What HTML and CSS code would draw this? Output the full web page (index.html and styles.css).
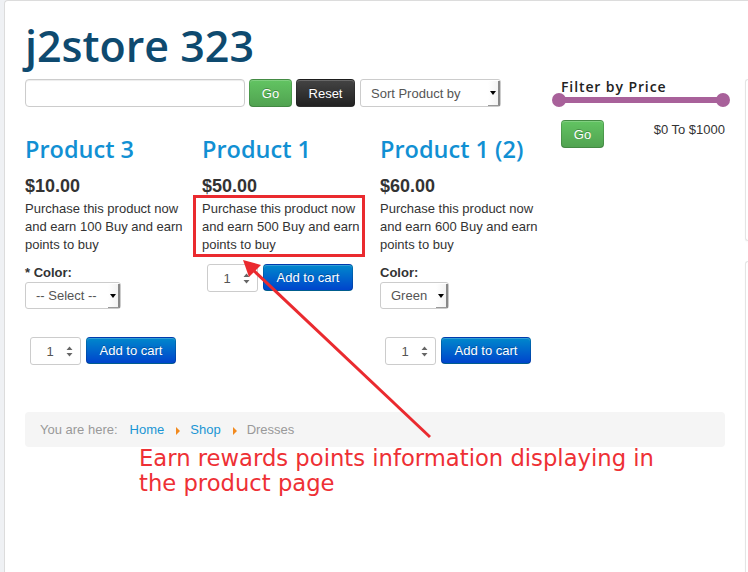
FILE: index.html
```html
<!DOCTYPE html>
<html>
<head>
<meta charset="utf-8">
<link rel="stylesheet" href="styles.css">
</head>
<body>
<div class="frame">
  <div class="page">
    <main class="content">
      <h1 class="site-title">j2store 323</h1>
      <div class="layout">
        <div class="main-col">
          <div class="toolbar">
            <div class="text-input"></div>
            <span class="btn btn-success">Go</span>
            <span class="btn btn-inverse">Reset</span>
            <div class="select select-sort"><span class="select-text">Sort Product by</span><span class="select-arrow"><svg width="6" height="4" viewBox="0 0 6 4"><path d="M0 0H6L3 4Z" fill="#000"/></svg></span></div>
          </div>
          <div class="products">
            <div class="product">
              <h2 class="product-title">Product 3</h2>
              <div class="price">$10.00</div>
              <p class="desc">Purchase this product now and earn 100 Buy and earn points to buy</p>
              <div class="options">
                <div class="opt-label">* Color:</div>
                <div class="select select-opt"><span class="select-text">-- Select --</span><span class="select-arrow"><svg width="6" height="4" viewBox="0 0 6 4"><path d="M0 0H6L3 4Z" fill="#000"/></svg></span></div>
              </div>
              <div class="cart-row">
                <div class="qty"><span class="qty-val">1</span><svg class="spin" width="7" height="11" viewBox="0 0 7 11"><path d="M0.5 4L3.5 0.5L6.5 4Z M0.5 7L3.5 10.5L6.5 7Z" fill="#666"/></svg></div>
                <span class="btn btn-primary">Add to cart</span>
              </div>
            </div>
            <div class="product">
              <h2 class="product-title">Product 1</h2>
              <div class="price">$50.00</div>
              <p class="desc">Purchase this product now and earn 500 Buy and earn points to buy</p>
              <div class="cart-row">
                <div class="qty"><span class="qty-val">1</span><svg class="spin" width="7" height="11" viewBox="0 0 7 11"><path d="M0.5 4L3.5 0.5L6.5 4Z M0.5 7L3.5 10.5L6.5 7Z" fill="#666"/></svg></div>
                <span class="btn btn-primary">Add to cart</span>
              </div>
            </div>
            <div class="product">
              <h2 class="product-title">Product 1 (2)</h2>
              <div class="price">$60.00</div>
              <p class="desc">Purchase this product now and earn 600 Buy and earn points to buy</p>
              <div class="options">
                <div class="opt-label">Color:</div>
                <div class="select select-green"><span class="select-text">Green</span><span class="select-arrow"><svg width="6" height="4" viewBox="0 0 6 4"><path d="M0 0H6L3 4Z" fill="#000"/></svg></span></div>
              </div>
              <div class="cart-row">
                <div class="qty"><span class="qty-val">1</span><svg class="spin" width="7" height="11" viewBox="0 0 7 11"><path d="M0.5 4L3.5 0.5L6.5 4Z M0.5 7L3.5 10.5L6.5 7Z" fill="#666"/></svg></div>
                <span class="btn btn-primary">Add to cart</span>
              </div>
            </div>
          </div>
        </div>
        <aside class="filter">
          <h3 class="filter-title">Filter by Price</h3>
          <div class="slider"><span class="knob"></span><span class="track"></span><span class="knob"></span></div>
          <div class="filter-row">
            <span class="btn btn-success btn-go2">Go</span>
            <span class="range">$0 To $1000</span>
          </div>
        </aside>
      </div>
      <div class="breadcrumb">
        <span class="bc-muted">You are here:</span>
        <span class="bc-link">Home</span>
        <span class="bc-sep"></span>
        <span class="bc-link">Shop</span>
        <span class="bc-sep"></span>
        <span class="bc-muted">Dresses</span>
      </div>
    </main>
    <div class="side">
      <div class="side-card card-a"></div>
      <div class="side-card card-b"></div>
    </div>
  </div>

  <div class="highlight-box"></div>
  <svg class="arrow" width="748" height="572" viewBox="0 0 748 572">
    <line x1="430" y1="437" x2="252" y2="269" stroke="#ea2a2f" stroke-width="3"/>
    <path d="M243 260 L261 265 L249 277 Z" fill="#ea2a2f"/>
  </svg>
  <div class="note">Earn rewards points information displaying in<br>the product page</div>
</div>
</body>
</html>
```
FILE: styles.css
```css
* { box-sizing: border-box; }
html, body { margin: 0; padding: 0; }
body {
  background: #eff1f4;
  font-family: "Liberation Sans", Arial, sans-serif;
  font-size: 13px;
  color: #333;
  width: 748px;
  height: 572px;
  overflow: hidden;
}
.frame { position: relative; width: 748px; height: 572px; }
.page {
  margin-left: 4px;
  height: 572px;
  background: #fff;
  border-left: 1px solid #dcdcdc;
  border-top: 1px solid #dcdcdc;
  border-top-left-radius: 4px;
  display: flex;
}
.content { width: 740px; flex: none; padding: 0 20px; }
.site-title {
  margin: 20px 0 8px;
  font-family: "Open Sans", sans-serif;
  font-weight: 600;
  font-size: 43px;
  line-height: 50px;
  color: #0e4a6f;
  letter-spacing: 0;
}
.layout { display: flex; }
.main-col { width: 527px; flex: none; }
.toolbar { display: flex; align-items: flex-start; height: 28px; }
.text-input {
  width: 220px; height: 28px;
  border: 1px solid #ccc; border-radius: 4px;
  box-shadow: inset 0 1px 1px rgba(0,0,0,.075);
  margin-right: 4px;
}
.btn {
  display: inline-flex; align-items: center; justify-content: center;
  height: 27px; padding: 0 12px;
  border-radius: 4px;
  color: #fff; font-size: 13px;
  text-shadow: 0 -1px 0 rgba(0,0,0,.25);
  border: 1px solid rgba(0,0,0,.15);
  border-bottom-color: rgba(0,0,0,.3);
  box-shadow: inset 0 1px 0 rgba(255,255,255,.2);
}
.btn-success { background: linear-gradient(#62c462, #51a351); }
.btn-inverse { background: linear-gradient(#444, #222); margin-left: 0; }
.btn-primary { background: linear-gradient(#0088cc, #0044cc); width: 90px; }
.toolbar .btn-success { width: 43px; margin-right: 4px; height: 28px; }
.toolbar .btn-inverse { width: 59px; height: 28px; margin-right: 5px; }
.select {
  display: flex; align-items: stretch;
  border: 1px solid #ccc; border-radius: 3px;
  background: #fff;
  color: #555;
}
.select-text { flex: 1; display: flex; align-items: center; padding-left: 10px; }
.select-arrow {
  width: 12px; display: flex; align-items: center; justify-content: center;
  background: linear-gradient(to right, #fff, #f3f3f3);
  border-right: 2px solid #888;
  border-bottom: 1px solid #999;
  margin: 1px 0 0 0;
}
.select-sort { width: 141px; height: 28px; }
.select-opt { width: 96px; height: 27px; }
.select-green { width: 69px; height: 27px; }
.select-green .select-text { padding-left: 10px; }
.products {
  display: grid;
  grid-template-columns: 177px 178px 172px;
  margin-top: 27px;
}
.product-title {
  margin: 0;
  font-family: "Open Sans", sans-serif;
  font-weight: 600;
  font-size: 23.5px;
  line-height: 30px;
  color: #1190d3;
  white-space: nowrap;
}
.price {
  margin-top: 12px;
  font-weight: bold;
  font-size: 18px;
  line-height: 20px;
}
.desc {
  margin: 4px 0 0;
  line-height: 18px;
  padding-right: 12px;
}
.options { margin-top: 10px; margin-bottom: 28px; }
.opt-label { font-weight: bold; line-height: 18px; }
.cart-row { display: flex; align-items: flex-start; margin-top: 10px; padding-left: 5px; }
.options + .cart-row { margin-top: 0; }
.qty {
  width: 51px; height: 28px;
  border: 1px solid #ccc; border-radius: 3px;
  display: flex; align-items: center;
  margin-right: 5px;
  color: #555;
}
.qty-val { width: 36px; text-align: center; padding-left: 2px; }
.spin { margin-left: -1px; }
.filter { width: 173px; flex: none; padding-top: 0; }
.filter-title {
  margin: 0 0 0 9px;
  font-family: "Open Sans", sans-serif;
  font-weight: 600;
  font-size: 14px;
  line-height: 16px;
  letter-spacing: 0.9px;
  color: #222;
}
.slider {
  display: flex; align-items: center;
  width: 178px; height: 14px;
  margin-top: -2px;
}
.knob { width: 14px; height: 14px; border-radius: 50%; background: #a8619a; flex: none; }
.track { flex: 1; height: 6px; background: #a8619a; margin: 0 -2px; }
.filter-row {
  display: flex; justify-content: space-between; align-items: flex-start;
  margin-top: 13px; padding-left: 9px;
}
.btn-go2 { width: 43px; height: 28px; }
.range { padding-top: 2px; color: #333; }
.breadcrumb {
  margin-top: 47px;
  background: #f5f5f5;
  border-radius: 4px;
  padding: 9px 15px 8px;
  line-height: 18px;
  display: flex; align-items: center;
}
.bc-muted { color: #999; }
.bc-muted:first-child { margin-right: 12px; }
.bc-link { color: #1a95d4; }
.bc-sep {
  width: 0; height: 0;
  border-top: 4px solid transparent;
  border-bottom: 4px solid transparent;
  border-left: 4px solid #f28a1e;
  margin: 2px 10px 0 12px;
}
.side { flex: 1; padding-top: 78px; }
.side-card {
  border: 1px solid #e4e4e4;
  border-right: none;
  border-radius: 4px 0 0 4px;
  background: #fff;
  box-shadow: 0 1px 2px rgba(0,0,0,.04);
}
.card-a { height: 162px; }
.card-b { height: 320px; margin-top: 20px; }
.highlight-box {
  position: absolute;
  left: 193px; top: 195px;
  width: 172px; height: 62px;
  border: 3px solid #ea2a2f;
}
.arrow { position: absolute; left: 0; top: 0; }
.note {
  position: absolute;
  left: 139px; top: 446px;
  font-family: "DejaVu Sans", sans-serif;
  font-size: 22.7px;
  line-height: 25px;
  color: #ee3035;
}
```
